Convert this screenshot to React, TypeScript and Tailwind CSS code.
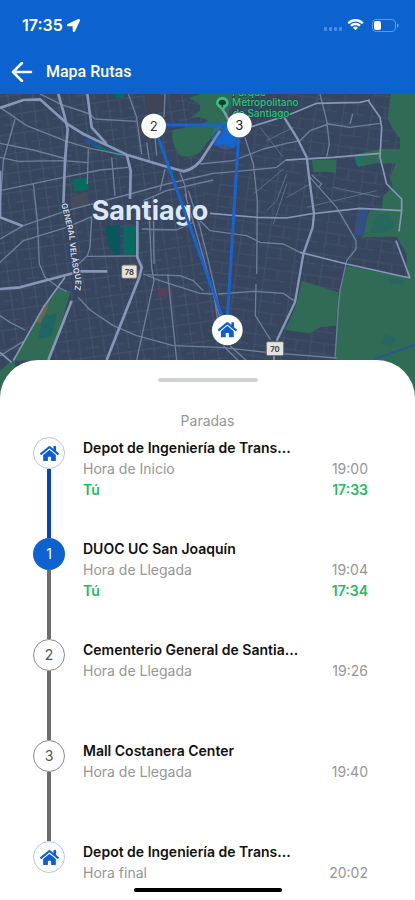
import { FaHome, FaLocationArrow } from "react-icons/fa";

type Stop = {
  marker: string;
  name: string;
  label: string;
  planned: string;
  actual?: string;
};

const stops: Stop[] = [
  { marker: "home", name: "Depot de Ingeniería de Trans...", label: "Hora de Inicio", planned: "19:00", actual: "17:33" },
  { marker: "1", name: "DUOC UC San Joaquín", label: "Hora de Llegada", planned: "19:04", actual: "17:34" },
  { marker: "2", name: "Cementerio General de Santia...", label: "Hora de Llegada", planned: "19:26" },
  { marker: "3", name: "Mall Costanera Center", label: "Hora de Llegada", planned: "19:40" },
  { marker: "home", name: "Depot de Ingeniería de Trans...", label: "Hora final", planned: "20:02" },
];

function StatusBar() {
  return (
    <div className="flex h-[50px] items-center justify-between pl-[22px] pr-4">
      <div className="flex items-center gap-1 text-base font-semibold">
        <span>17:35</span>
        <FaLocationArrow className="size-[13px]" />
      </div>
      <div className="flex items-center gap-1">
        <svg className="h-3 w-5" viewBox="0 0 20 12" fill="#4f8de2" aria-hidden="true">
          <rect x="1" y="8" width="3" height="4" rx="1" />
          <rect x="6" y="8" width="3" height="4" rx="1" />
          <rect x="11" y="8" width="3" height="4" rx="1" />
          <rect x="16" y="8" width="3" height="4" rx="1" />
        </svg>
        <svg className="h-3 w-[17px]" viewBox="0 0 17 12" fill="#fff" aria-hidden="true">
          <path d="M8.5 2.4c2.3 0 4.5.9 6.2 2.5.1.1.3.1.4 0l1.2-1.2c.1-.1.1-.3 0-.5a11.3 11.3 0 0 0-15.6 0c-.1.2-.1.4 0 .5l1.2 1.2c.1.1.3.1.4 0A9 9 0 0 1 8.500 2.400Z" />
          <path d="M8.500 6.200c1.300 0 2.500.5 3.400 1.300.1.1.3.1.5 0l1.200-1.200c.1-.1.1-.3 0-.5a7.400 7.400 0 0 0-10.200 0c-.1.2-.1.4 0 .5l1.200 1.200c.2.1.4.1.5 0 .9-.8 2.100-1.300 3.400-1.300Z" />
          <path d="M10.800 8.900c.1-.1.1-.3 0-.5a3.600 3.600 0 0 0-4.600 0c-.1.2-.1.4 0 .5l2.100 2.100c.1.1.3.1.4 0Z" />
        </svg>
        <svg className="ml-1 h-[13px] w-[27px]" viewBox="0 0 27 13" aria-hidden="true">
          <rect x=".5" y=".5" width="23" height="12" rx="3.500" fill="none" stroke="#5f99e6" />
          <rect x="2" y="2" width="7" height="9" rx="2" fill="#fff" />
          <path d="M25 4.500c1 .4 1.600 1.100 1.600 2s-.6 1.600-1.600 2Z" fill="#6fa4ea" />
        </svg>
      </div>
    </div>
  );
}

function RouteMap() {
  return (
    <svg
      className="block h-[304px] w-full bg-[#37455e]"
      viewBox="0 0 1245 912"
      preserveAspectRatio="xMidYMin slice"
      fontFamily="Inter, 'Liberation Sans', sans-serif"
      role="img"
      aria-label="Mapa de la ruta en Santiago"
    >
      <defs>
        <pattern id="blocks" width="74" height="58" patternUnits="userSpaceOnUse" patternTransform="rotate(-8)">
          <path d="M0 8H74M22 0V58M0 38H40M56 8V58" stroke="#4a5a73" strokeWidth="2" fill="none" />
        </pattern>
        <pattern id="blocksEast" width="84" height="66" patternUnits="userSpaceOnUse" patternTransform="rotate(8)">
          <path d="M0 12H84M20 0V66M20 44H84M60 12V44" stroke="#475871" strokeWidth="2" fill="none" />
        </pattern>
      </defs>

      <rect width="1245" height="912" fill="#37455e" />
      <path d="M0 0H560L700 912H0Z" fill="url(#blocks)" />
      <path d="M560 0H1245V912H700Z" fill="url(#blocksEast)" />

      {/* parks and open land */}
      <g fill="#2f6b55">
        <path d="M566 12 600 0H780L745 20 690 40 680 90 650 110 630 135 600 175Q560 200 535 180Q510 140 518 108L560 100 600 92 625 80 600 70 570 72 600 50 600 30Z" />
        <path d="M1172 0H1245V912H1220V480L1190 428 1085 430 1108 350 1145 345 1150 305 1178 280 1170 250 1188 208H1130L1075 218 1062 182 1140 165H1200V135L1175 100 1163 70Z" />
        <path d="M1225 470H1245V912H1005L1012 620 1040 515 1232 553Z" />
        <path d="M936 197H1008V236L975 233 940 235Z" />
        <path d="M906 560 1015 595 1008 695 960 700 930 718 855 708 888 635Z" />
        <path d="M175 585 212 592 150 800H38L75 740 125 645Z" />
        <path d="M0 830 30 805 45 800V912H0Z" />
      </g>
      <path d="M128 668 170 658 155 725 115 735Z" fill="#1f6563" />
      <path d="M150 615 130 640 108 684 122 688 140 650Z" fill="#6a6650" />
      <path d="M1155 720l30 12-12 28-28-10ZM1160 545l50 14v14l-40-5ZM1130 365l35-8 20 40-40 22-35-5Z" fill="#286660" />
      <path d="M1062 182 1085 184 1080 218 1070 214Z" fill="#1d7468" />
      <g fill="#08695f">
        <path d="M217 255 264 250 266 288 220 292Z" />
        <path d="M370 398 408 396 406 480 370 484Z" />
        <path d="M345 0H372V12H347ZM505 225l22 2-10 14Z" />
      </g>
      <path d="M316 395 360 393V484L345 482 322 450Z" fill="#07585c" />
      <path d="M255 136 370 186 362 190 290 162Z" fill="#086d6b" />
      <path d="M250 132 285 143 295 156 262 150Z" fill="#1c55a0" />
      <path d="M1078 345 1105 342 1092 425 1062 424Z" fill="#334f88" />
      <path d="M212 310 262 292 268 330 215 342Z" fill="#484b59" />
      <path d="M436 0H490V40L470 60 436 50Z" fill="#3e4555" />
      <path d="M470 586 503 582V610L475 608Z" fill="#573e59" />
      <path d="M1125 795 1180 775 1245 752" stroke="#285691" strokeWidth="6" fill="none" />

      {/* secondary streets */}
      <g fill="none" stroke="#6f7f9b" strokeWidth="4" strokeLinejoin="round">
        <path d="M0 40 80 95 200 142 270 163 380 185M0 148 100 168 200 195M0 190 55 202 190 200 265 206M120 0 185 32 270 60 285 75 410 82" />
        <path d="M45 75 10 200 0 340M100 270 112 380 118 510 135 550 175 580 200 592M0 290 190 250 300 228 385 220" />
        <path d="M0 435 70 395 200 350 390 300 500 270 640 238 735 230 830 220 858 198 1000 190" />
        <path d="M0 505 70 440 200 400 275 368M275 370 270 460 262 485 225 520M262 487 408 486M265 165 262 270M335 190 345 305" />
        <path d="M385 0 410 70 425 180M440 145 448 200M495 0 492 70M470 185 465 130M495 225 480 290M540 235 553 270 560 310" />
        <path d="M555 300 590 420 610 490 645 620 665 690M565 290 600 400 625 500 655 630" />
        <path d="M445 320 455 520 462 560 410 798M460 310 462 510M503 540 530 798M425 405 530 408 580 385M430 320 500 290 640 258" />
        <path d="M430 540 480 560 600 598 640 600M430 542 540 545 580 560 610 590M0 665 30 685 75 708M0 785 70 742M235 610 270 648 340 695 410 725 520 755 660 760 800 775 1010 792" />
        <path d="M735 130 760 210 772 320 770 540M768 570 766 665 812 738M590 370 630 410 740 425 780 445 850 450 900 475M655 690 640 590M670 755 715 800M690 755 740 800" />
        <path d="M600 210 700 200 790 165 860 148 900 140 930 110 985 90 1050 100 1140 88M960 0 980 80 988 150 980 188M1050 90 1058 60" />
        <path d="M930 250 1010 340 1068 440 1068 465 1040 500 1020 590 1015 640 1005 795M935 243 965 270 958 278M655 600 760 592 850 598 885 622" />
        <path d="M860 240 830 320 800 350M850 225 760 300M930 270 860 310M860 270 820 390M1000 280 1140 310M920 340 1130 290M780 100 850 190M800 140 880 100" strokeWidth="2" />
      </g>

      {/* main avenues */}
      <g fill="none" stroke="#8797b8" strokeWidth="8" strokeLinejoin="round">
        <path d="M0 42 70 18 120 16 205 92 250 120 380 182 490 215 550 232Q590 225 615 180L660 110" />
        <path d="M175 0 192 60 203 105 195 200 190 335M262 0 275 100 320 150M380 182 392 230 390 315M412 370 412 490 425 520 418 550 320 798" />
        <path d="M0 230 0 370 68 396M0 585 60 580 210 540 240 532 322 532M215 620 145 798" />
        <path d="M195 550 130 640 40 800M0 775 35 805" strokeWidth="5" />
        <path d="M840 50 890 130 920 190 930 270 942 360 938 400 910 480 885 625 830 740M665 40 690 85" strokeWidth="7" />
        <path d="M755 98 860 65 950 28 1080 25 1110 18M858 198 1000 190 1140 178M630 358 770 370 860 372 930 360 1080 343 1205 350" strokeWidth="5" />
        <path d="M1105 20 1140 70 1145 100 1140 190 1160 270 1205 315 1205 350 1197 412M900 475 1040 510 1230 552M1188 440 1230 552M822 784V800" strokeWidth="5" />
      </g>

      {/* place and road names */}
      <text x="275" y="377" fontSize="81" fontWeight="700" fill="#dbe8fb" stroke="#37455e" strokeWidth="4" paintOrder="stroke">
        Santiago
      </text>
      <path id="velasquez" d="M184 330Q200 395 208 430Q213 510 224 545Q232 570 212 635" fill="none" />
      <text fontSize="24" fontWeight="600" fill="#d3ddee" stroke="#37455e" strokeWidth="6" paintOrder="stroke">
        <textPath href="#velasquez">GENERAL VELÁSQUEZ</textPath>
      </text>
      <g fill="#3cbd82" fontSize="30" fontWeight="500" stroke="#1f4b48" strokeWidth="5" paintOrder="stroke">
        <text x="696" y="6">Parque</text>
        <text x="696" y="37">Metropolitano</text>
        <text x="698" y="68">de Santiago</text>
      </g>
      <path d="M667 8a19 19 0 0 1 19 19c0 10-12 15-19 24-7-9-19-14-19-24a19 19 0 0 1 19-19Z" fill="#3fb985" />
      <path d="M656 28a11 11 0 0 1 22 0c0 4-4 5-9 5v7h-4v-7c-5 0-9-1-9-5Z" fill="#18382f" />
      <g fontSize="23" fontWeight="700" fill="#4a4a48" textAnchor="middle">
        <rect x="365" y="513" width="46" height="40" rx="5" fill="#e6e3dd" stroke="#6e6d68" strokeWidth="3" />
        <text x="388" y="542">78</text>
        <rect x="799" y="743" width="52" height="42" rx="5" fill="#e3e3e1" stroke="#6e6d68" strokeWidth="3" />
        <text x="825" y="773">70</text>
      </g>

      {/* planned route */}
      <circle cx="678" cy="125" r="42" fill="#2f7ad8" opacity=".35" />
      <path d="M682 88 640 156 676 150 704 164 712 110Z" fill="#1565d3" />
      <path d="M461 93 718 92 680 705Z" fill="none" stroke="#1763cf" strokeWidth="9" />
      <circle cx="675" cy="712" r="40" fill="#1763cf" />
      <g fill="#fff" textAnchor="middle" fontSize="39">
        <circle cx="461" cy="96" r="37" />
        <circle cx="718" cy="93" r="37" />
        <circle cx="682" cy="708" r="46" />
        <text x="461" y="110" fill="#333">2</text>
        <text x="718" y="107" fill="#222">3</text>
      </g>
      <FaHome x={653} y={678} size={58} color="#0d5fd0" />
    </svg>
  );
}

function StopMarker({ marker }: { marker: string }) {
  if (marker === "home") {
    return (
      <span className="flex size-8 items-center justify-center rounded-full border border-[#b3c8ea]">
        <FaHome className="size-[19px] text-[#0d5fd0]" />
      </span>
    );
  }
  const tone = marker === "1" ? "bg-[#0d62cf] text-white" : "border border-[#8c8c8c] text-[#555]";
  return <span className={`flex size-8 items-center justify-center rounded-full text-sm ${tone}`}>{marker}</span>;
}

function StopRow({ stop, first, last }: { stop: Stop; first: boolean; last: boolean }) {
  return (
    <li className={`flex gap-[18px] ${last ? "" : "min-h-[101px]"}`}>
      <div className="flex flex-col items-center">
        <StopMarker marker={stop.marker} />
        {!last && <span className={`w-1 flex-1 ${first ? "bg-[#0a40bd]" : "bg-[#6c6c6c]"}`} />}
      </div>
      <div className="min-w-0 flex-1 text-sm leading-[21px] text-[#969696]">
        <h3 className="truncate font-semibold text-[#111]">{stop.name}</h3>
        <div className="flex justify-between">
          <span>{stop.label}</span>
          <time>{stop.planned}</time>
        </div>
        {stop.actual && (
          <div className="flex justify-between font-semibold text-[#27b864]">
            <span>Tú</span>
            <time>{stop.actual}</time>
          </div>
        )}
      </div>
    </li>
  );
}

export default function App() {
  return (
    <div className="min-h-screen bg-white font-['Inter','Liberation_Sans',sans-serif]">
      <header className="bg-[#0c62cf] text-white">
        <StatusBar />
        <div className="flex h-11 items-center gap-3 pl-[10px]">
          <button type="button" aria-label="Volver" className="flex size-6 items-center justify-center">
            <svg className="h-5 w-[22px]" viewBox="0 0 22 20" fill="none" stroke="currentColor" strokeWidth="2.500" strokeLinecap="round" strokeLinejoin="round">
              <path d="M20 10H2M11 1 2 10l9 9" />
            </svg>
          </button>
          <h1 className="font-['Roboto','Liberation_Sans',sans-serif] text-base font-medium">Mapa Rutas</h1>
        </div>
      </header>

      <main>
        <RouteMap />
        <section className="relative -mt-[38px] rounded-t-[38px] bg-white pb-2 pt-[18px]">
          <div className="mx-auto h-1 w-[100px] rounded-full bg-[#cfd3d6]" />
          <h2 className="mt-7 text-center text-sm leading-[21px] text-[#969696]">Paradas</h2>
          <ol className="mt-[6px] pl-[33px] pr-[47px]">
            {stops.map((stop, i) => (
              <StopRow key={i} stop={stop} first={i === 0} last={i === stops.length - 1} />
            ))}
          </ol>
          <div className="mx-auto mt-[5px] h-1 w-[148px] rounded-full bg-black" />
        </section>
      </main>
    </div>
  );
}
